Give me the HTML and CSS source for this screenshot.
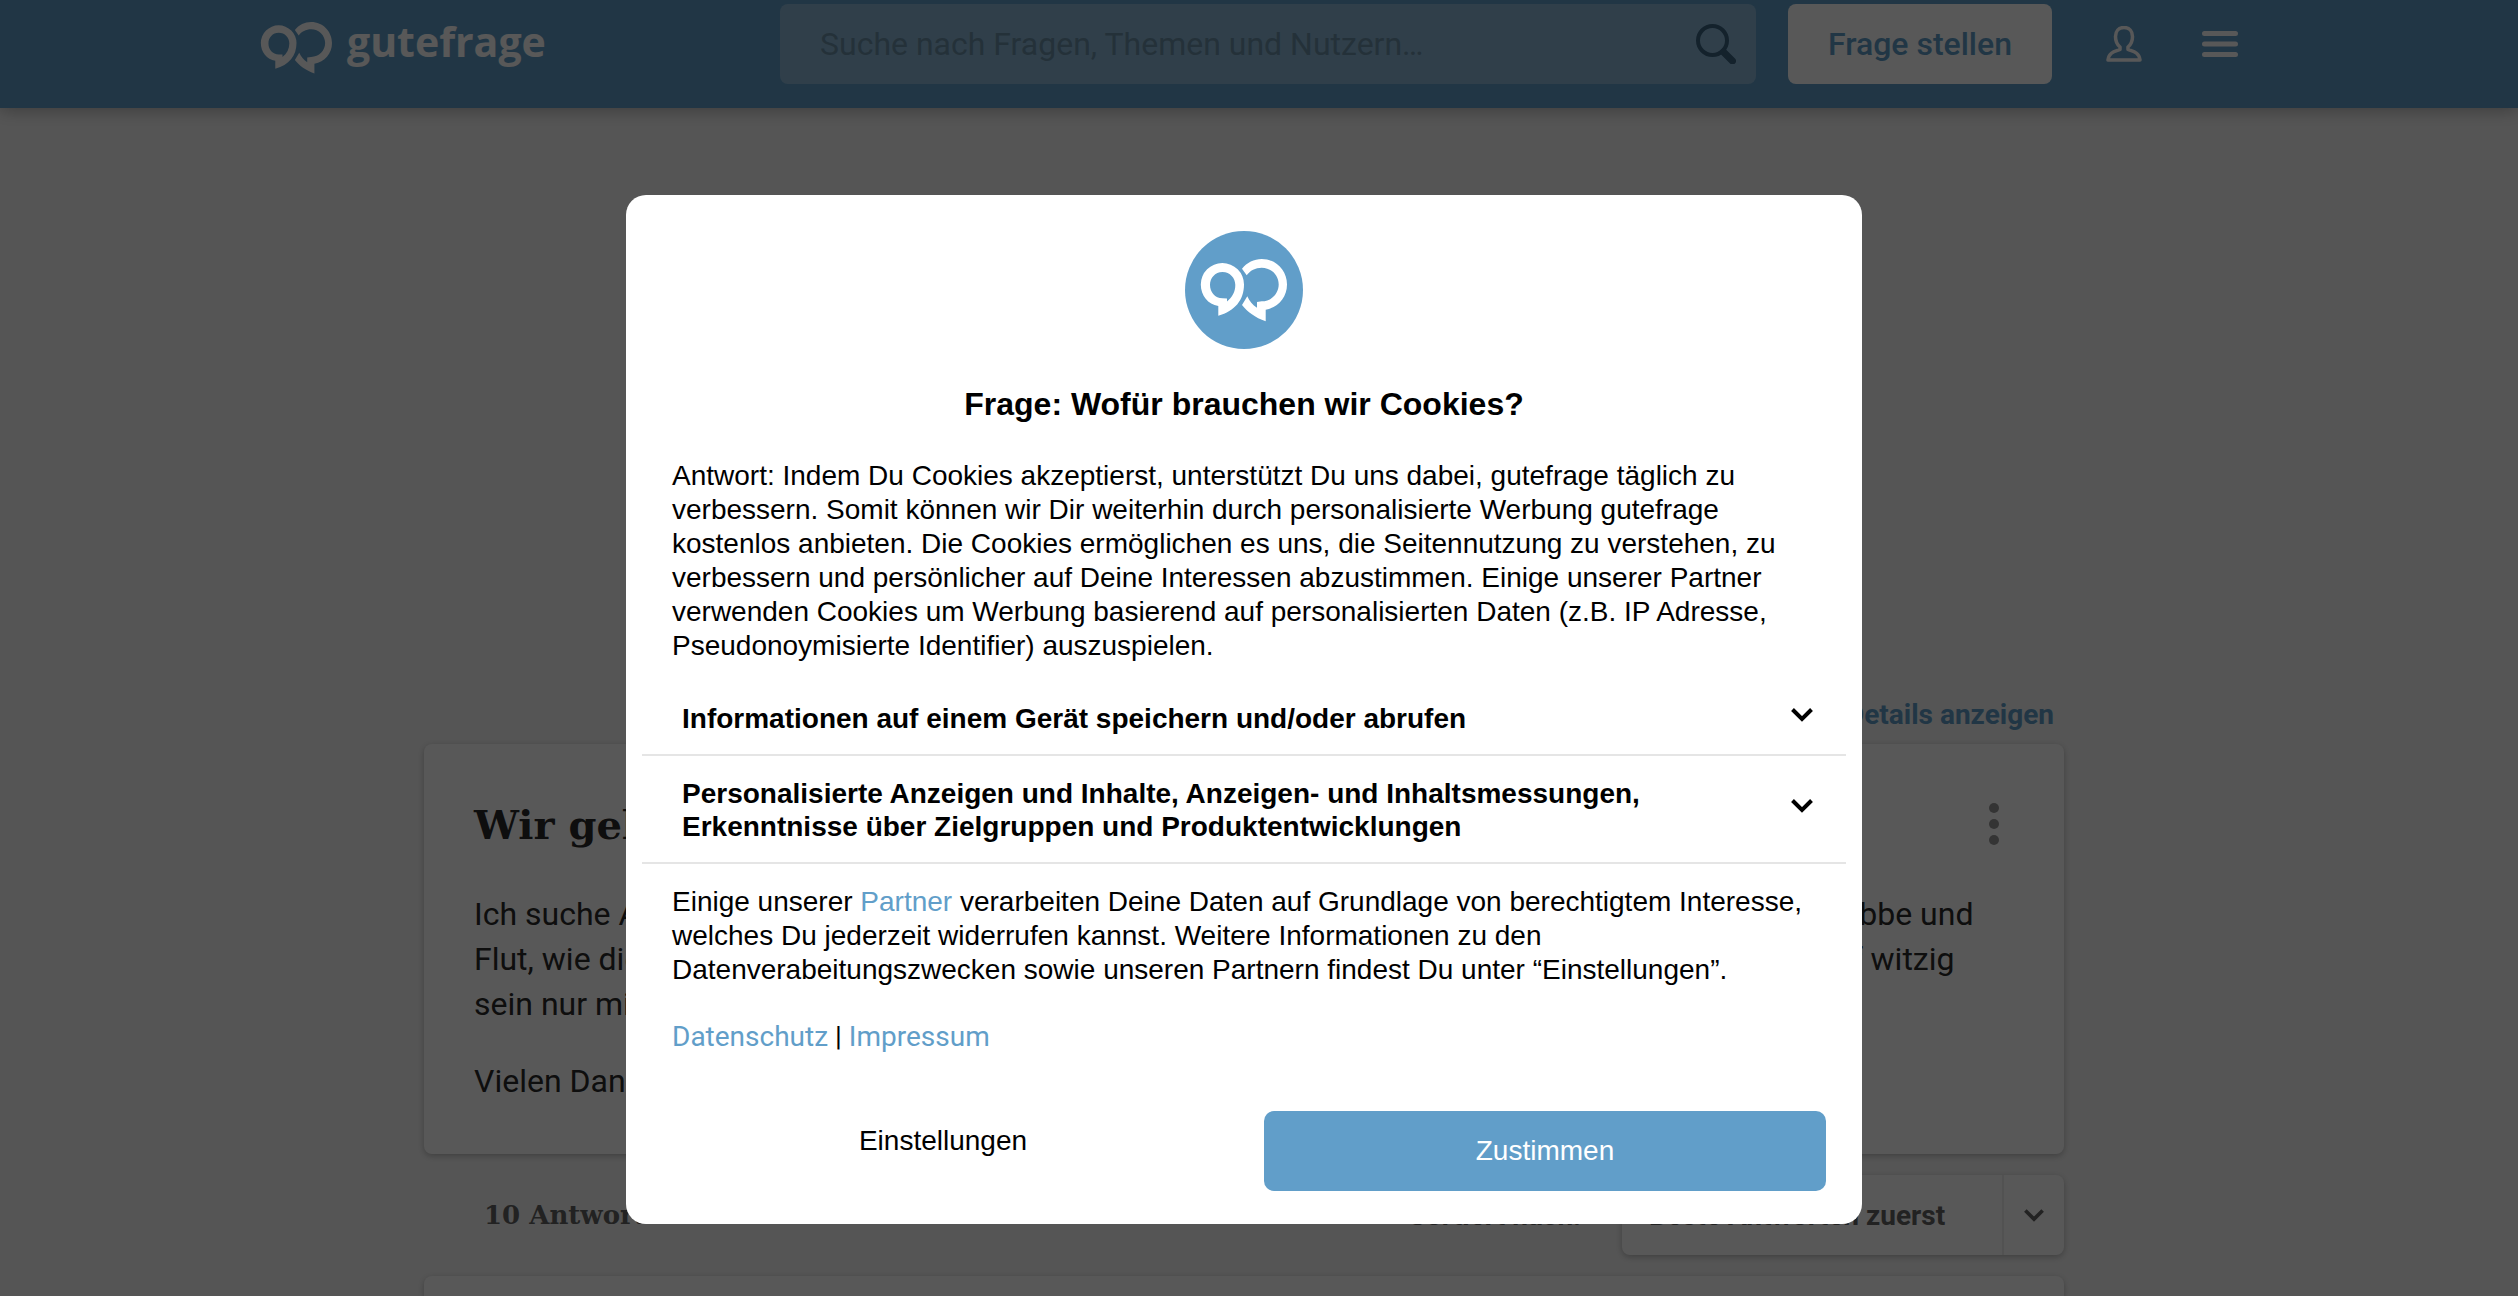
FILE: index.html
```html
<!DOCTYPE html>
<html lang="de">
<head>
  <meta charset="UTF-8" />
  <meta name="viewport" content="width=device-width, initial-scale=1.0" />
  <title>gutefrage</title>
  <link rel="stylesheet" href="styles.css">
</head>
<body>
  <svg class="sprite" aria-hidden="true">
    <symbol id="mark" viewBox="15 28 88 63">
      <path fill="currentColor" fill-rule="evenodd" d="M37.3 32A21.5 21.5 0 0 0 15.8 53.5C15.8 64.5 23 73.500 33.300 75V84.700C50 80 59 69 59 53.500A21.700 21.500 0 0 0 37.300 32ZM37.500 41C45 41 50.300 47 50.300 54C50.300 60.500 47.500 66 42 70.500V67.500L37.500 67.300C30 67.300 25 61 25 54C25 47 30 41 37.500 41Z"/>
      <path fill="currentColor" d="M57 37.700C62 31.500 69 28 76.700 28C91 28 102 39.500 102 53.500C102 66.500 93 76.500 80.700 78.700V90.300C70 86.500 62.500 81 57 74L62.300 65.300C64.500 70 67.500 74 72 76.700V71L76.700 70.300C86.500 70.300 93.700 62.500 93.700 53.500C93.700 44 86 36.700 76.700 36.700C70.500 36.700 65 39.500 61.700 44.300Z"/>
    </symbol>
    <symbol id="chevron" viewBox="0 0 22 14">
      <path fill="none" stroke="currentColor" stroke-width="4" d="M1.500 1.500L11 11L20.500 1.500"/>
    </symbol>
  </svg>

  <header class="header">
    <div class="header-inner">
      <a class="logo" href="#">
        <svg class="logo-mark"><use href="#mark"/></svg>
        <span>gutefrage</span>
      </a>
      <form class="search">
        <input type="text" aria-label="Suche" placeholder="Suche nach Fragen, Themen und Nutzern…" />
        <button type="button" class="icon-button" aria-label="Suchen">
          <svg width="40" height="40" viewBox="0 0 40 40">
            <circle cx="16.500" cy="16.500" r="14.500" fill="none" stroke="currentColor" stroke-width="4"/>
            <path d="M27.500 28L36.500 37" stroke="currentColor" stroke-width="7" stroke-linecap="round"/>
          </svg>
        </button>
      </form>
      <button type="button" class="ask-button">Frage stellen</button>
      <nav class="header-icons">
        <a href="#" aria-label="Profil">
          <svg width="36" height="36" viewBox="0 0 36 36" fill="none" stroke="currentColor" stroke-width="3.500" stroke-linejoin="round">
            <path d="M18 1.500C12.500 1.500 9.500 5.500 9.500 10.500C9.500 14.500 11 18.500 14 21V23.500C9 25.500 3 26 2 34H34C33 26 27 25.500 22 23.500V21C25 18.500 26.500 14.500 26.500 10.500C26.500 5.500 23.500 1.500 18 1.500Z"/>
          </svg>
        </a>
        <button type="button" class="icon-button" aria-label="Menü">
          <svg width="36" height="28" viewBox="0 0 36 28" stroke="currentColor" stroke-width="5" stroke-linecap="round">
            <path d="M2.500 3.500H33.500M2.500 14H33.500M2.500 24.500H33.500"/>
          </svg>
        </button>
      </nav>
    </div>
  </header>

  <main class="page">
    <a class="details-link" href="#">Details anzeigen</a>

    <article class="card question">
      <div class="question-head">
        <h1>Wir gehen</h1>
        <button type="button" class="icon-button more" aria-label="Mehr">
          <svg width="10" height="42" viewBox="0 0 10 42" fill="currentColor">
            <circle cx="5" cy="5" r="5"/><circle cx="5" cy="21" r="5"/><circle cx="5" cy="37" r="5"/>
          </svg>
        </button>
      </div>
      <p>Ich suche Antworten auf die Frage, wie wir am besten an der Nordsee gehen und was macht, bei Ebbe und<br>
        Flut, wie die Gezeiten das Meer bewegen und was man am Strand noch alles machen kann, er darf witzig<br>
        sein nur mit Humor.</p>
      <p>Vielen Dank</p>
    </article>

    <div class="answers-bar">
      <h2>10 Antworten</h2>
      <label for="sort">Sortiert nach:</label>
      <div class="card sort">
        <select id="sort">
          <option>Beste Antworten zuerst</option>
          <option>Neueste zuerst</option>
        </select>
        <span class="sort-arrow"><svg width="20" height="13"><use href="#chevron"/></svg></span>
      </div>
    </div>

    <article class="card answer"></article>
  </main>

  <div class="overlay">
    <div class="modal" role="dialog" aria-labelledby="modal-title">
      <div class="modal-logo"><svg><use href="#mark"/></svg></div>
      <h2 id="modal-title">Frage: Wofür brauchen wir Cookies?</h2>
      <p>Antwort: Indem Du Cookies akzeptierst, unterstützt Du uns dabei, gutefrage täglich zu verbessern. Somit können wir Dir weiterhin durch personalisierte Werbung gutefrage kostenlos anbieten. Die Cookies ermöglichen es uns, die Seitennutzung zu verstehen, zu verbessern und persönlicher auf Deine Interessen abzustimmen. Einige unserer Partner verwenden Cookies um Werbung basierend auf personalisierten Daten (z.B. IP Adresse, Pseudonoymisierte Identifier) auszuspielen.</p>

      <div class="purposes">
        <button type="button" class="purpose">
          <span>Informationen auf einem Gerät speichern und/oder abrufen</span>
          <svg width="22" height="14"><use href="#chevron"/></svg>
        </button>
        <button type="button" class="purpose">
          <span>Personalisierte Anzeigen und Inhalte, Anzeigen- und Inhaltsmessungen, Erkenntnisse über Zielgruppen und Produktentwicklungen</span>
          <svg width="22" height="14"><use href="#chevron"/></svg>
        </button>
      </div>

      <p>Einige unserer <a href="#">Partner</a> verarbeiten Deine Daten auf Grundlage von berechtigtem Interesse, welches Du jederzeit widerrufen kannst. Weitere Informationen zu den Datenverabeitungszwecken sowie unseren Partnern findest Du unter “Einstellungen”.</p>

      <p class="legal"><a href="#">Datenschutz</a> | <a href="#">Impressum</a></p>

      <div class="actions">
        <button type="button" class="settings-button">Einstellungen</button>
        <button type="button" class="accept-button">Zustimmen</button>
      </div>
    </div>
  </div>
</body>
</html>
```
FILE: styles.css
```css
* {
  margin: 0;
  padding: 0;
  box-sizing: border-box;
}

body {
  display: flex;
  flex-direction: column;
  font-family: Roboto, "Liberation Sans", sans-serif;
  font-size: 32px;
  background: #f6f6f6;
  color: #292929;
  height: 100vh;
  overflow: hidden;
}

button, input, select {
  font: inherit;
  color: inherit;
  border: none;
  background: none;
}

button {
  cursor: pointer;
}

a {
  color: #619ec9;
  text-decoration: none;
}

svg {
  display: block;
  flex: none;
}

.sprite {
  position: absolute;
  width: 0;
  height: 0;
}

/* header */
.header {
  background: #619ec9;
  color: white;
  padding: 4px 30px 24px 0;
  box-shadow: 0 2px 16px rgba(0, 0, 0, 0.3);
}

.header-inner {
  display: flex;
  align-items: center;
  max-width: 1988px;
  margin: 0 auto;
  padding-left: 10px;
  height: 80px;
}

.logo {
  display: flex;
  align-items: center;
  gap: 14px;
  width: 520px;
  color: white;
  font-family: "Open Sans", sans-serif;
  font-size: 41px;
  font-weight: 700;
  line-height: 72px;
}

.logo-mark {
  width: 73px;
  height: 52px;
  margin-top: 8px;
}

.logo span {
  padding-bottom: 6px;
}

.search {
  display: flex;
  align-items: center;
  flex: 1;
  height: 80px;
  padding: 0 20px 0 40px;
  border-radius: 8px;
  background: rgba(255, 255, 255, 0.27);
  color: #3a6280;
}

.search input {
  flex: 1;
  outline: none;
}

.search input::placeholder {
  color: #6a8ea6;
  opacity: 1;
}

.icon-button {
  color: inherit;
}

.ask-button {
  width: 264px;
  height: 80px;
  margin-left: 32px;
  border-radius: 8px;
  background: white;
  color: #619ec9;
  font-weight: 500;
}

.header-icons {
  display: flex;
  align-items: center;
  gap: 60px;
  margin-left: 54px;
}

.header-icons a {
  color: white;
}

/* question page */
.page {
  display: flex;
  flex: 1;
  flex-direction: column;
  width: 100%;
  max-width: 1670px;
  min-height: 0;
  margin: 0 auto;
  padding: 590px 30px 0 0;
}

.details-link {
  align-self: flex-end;
  padding: 0 10px;
  margin-bottom: 12px;
  font-size: 28px;
  font-weight: 700;
  line-height: 34px;
}

.card {
  background: white;
  border-radius: 8px;
  box-shadow: 0 2px 6px rgba(0, 0, 0, 0.25);
}

.question {
  flex: none;
  height: 410px;
  padding: 48px 50px;
}

.question-head {
  display: flex;
  justify-content: space-between;
  align-items: center;
  height: 64px;
  padding-right: 15px;
  margin-bottom: 36px;
}

.question-head h1 {
  font-family: "DejaVu Serif", serif;
  font-size: 40px;
}

.more {
  color: #969696;
}

.question p {
  line-height: 45px;
  margin-bottom: 32px;
  white-space: nowrap;
}

.answers-bar {
  display: flex;
  flex: none;
  align-items: center;
  margin-top: 21px;
  margin-bottom: 21px;
  padding-left: 60px;
  color: #636363;
  font-size: 28px;
  font-weight: 700;
}

.answers-bar h2 {
  flex: 1;
  font-family: "DejaVu Serif", serif;
  font-size: 26px;
}

.answers-bar label {
  margin-right: 41px;
}

.sort {
  display: flex;
  width: 442px;
  height: 80px;
}

.sort select {
  flex: 1;
  appearance: none;
  padding-left: 27px;
}

.sort-arrow {
  display: flex;
  align-items: center;
  justify-content: center;
  width: 62px;
  border-left: 2px solid #eee;
}

.answer {
  flex: 1;
  border-radius: 8px 8px 0 0;
}

/* cookie dialog */
.overlay {
  position: fixed;
  inset: 0;
  display: flex;
  justify-content: center;
  align-items: flex-start;
  padding: 195px 30px 0 0;
  background: rgba(0, 0, 0, 0.655);
}

.modal {
  width: 1236px;
  padding: 36px 16px 33px;
  border-radius: 20px;
  background: white;
  color: black;
  font-family: "Liberation Sans", Arial, sans-serif;
  font-size: 28px;
  line-height: 34px;
}

.modal-logo {
  display: flex;
  align-items: center;
  justify-content: center;
  width: 118px;
  height: 118px;
  margin: 0 auto 36px;
  border-radius: 50%;
  background: #619ec9;
  color: white;
}

.modal-logo svg {
  width: 88px;
  height: 63px;
}

.modal h2 {
  margin-bottom: 36px;
  font-size: 32px;
  line-height: 38px;
  text-align: center;
}

.modal p {
  padding: 0 30px;
}

.purposes {
  margin: 18px 0 21px;
}

.purpose {
  display: flex;
  justify-content: space-between;
  align-items: center;
  width: 100%;
  padding: 21px 33px 19px 40px;
  border-bottom: 2px solid #e5e5e5;
  font-weight: 700;
  line-height: 33px;
  text-align: left;
}

.purpose span {
  max-width: 1000px;
}

.purpose svg {
  margin-bottom: 8px;
}

.modal .legal {
  margin-top: 33px;
  font-family: Roboto, sans-serif;
}

.actions {
  display: flex;
  gap: 40px;
  margin-top: 57px;
  padding: 0 20px;
}

.actions button {
  flex: 1;
  height: 80px;
  border-radius: 10px;
}

.actions .settings-button {
  height: 60px;
}

.accept-button {
  background: #619ec9;
  color: white;
}
```
